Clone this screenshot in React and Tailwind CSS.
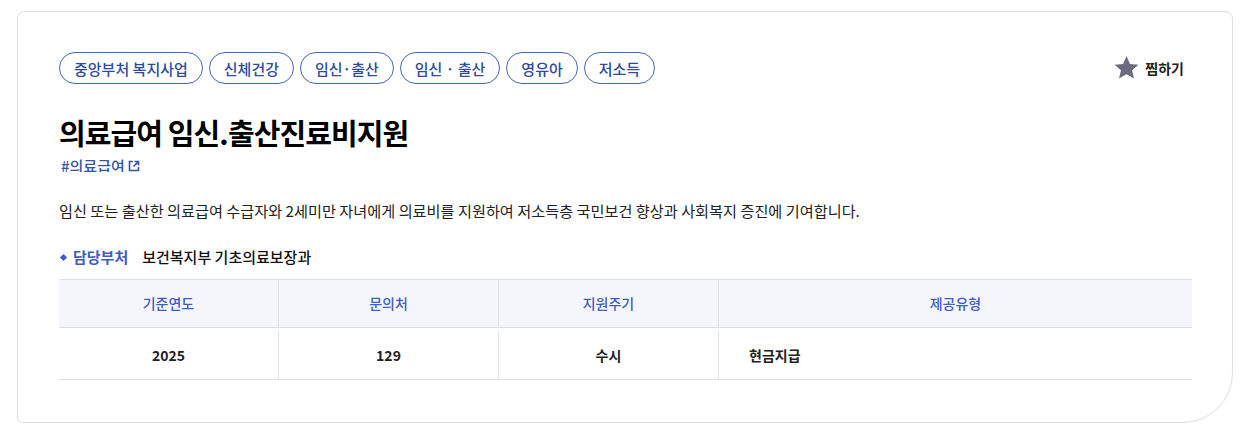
import React from 'react';

const tags = ['중앙부처 복지사업', '신체건강', '임신·출산', '임신 · 출산', '영유아', '저소득'];

const columns = [
  { head: '기준연도', value: '2025', w: 'w-[220px]', align: 'text-center' },
  { head: '문의처', value: '129', w: 'w-[220px]', align: 'text-center' },
  { head: '지원주기', value: '수시', w: 'w-[220px]', align: 'text-center' },
  { head: '제공유형', value: '현금지급', w: 'flex-1', align: 'text-left pl-[30px]' },
];

export default function App() {
  return (
    <div
      className="w-[1250px] h-[435px] bg-white pt-[11px] pl-[17px]"
      style={{ fontFamily: '"Noto Sans CJK KR", "Noto Sans", sans-serif' }}
    >
      <div className="w-[1216px] h-[412px] border border-[#dedede] rounded-t-[8px] rounded-bl-[6px] rounded-br-[50px] pt-[40px] pl-[41px] pr-[40px]">
        {/* tags + bookmark */}
        <div className="flex items-center justify-between">
          <div className="flex gap-[6px]">
            {tags.map((tag, i) => (
              <span
                key={i}
                className="h-[32px] px-[14px] flex items-center rounded-full border border-[#4a63b8] text-[#2f4a9e] text-[15px] font-medium leading-none"
              >
                {tag}
              </span>
            ))}
          </div>
          <button className="flex items-center gap-[5px] mr-[8px] text-[14px] font-bold text-[#222]">
            <svg width="27" height="26" viewBox="0 0 24 24">
              <path
                d="M12 1l3.2 7.3 7.8.6-5.9 5.1 1.8 7.8L12 17.8l-6.9 4 1.8-7.8L1 8.9l7.8-.6z"
                fill="#6b6b80"
              />
            </svg>
            찜하기
          </button>
        </div>

        {/* title */}
        <h1 className="mt-[28px] text-[29px] font-bold leading-[40px] text-black tracking-[-0.9px]">
          의료급여 임신.출산진료비지원
        </h1>
        <div className="mt-[6px] h-[14px] overflow-hidden">
          <span className="flex items-center gap-[3px] text-[15px] font-medium leading-[16px] text-[#3553a8] pl-[2px]">
            #의료급여
            <svg width="12" height="12" viewBox="0 0 12 12" fill="none" stroke="#3553a8" strokeWidth="1.6">
              <path d="M5 1.5H1.5v9h9V7" />
              <path d="M6.5 1.5h4v4M10.5 1.5L5.5 6.5" />
            </svg>
          </span>
        </div>

        {/* description */}
        <p className="mt-[26px] text-[15.2px] leading-[24px] text-[#222]">
          임신 또는 출산한 의료급여 수급자와 2세미만 자녀에게 의료비를 지원하여 저소득층 국민보건 향상과 사회복지 증진에 기여합니다.
        </p>

        {/* department */}
        <div className="mt-[23px] flex items-center text-[15px] leading-[24px]">
          <span className="w-[5px] h-[5px] bg-[#3f5bc4] rotate-45 ml-[2px] mr-[7px]" />
          <span className="font-bold text-[#3f5bc4]">담당부처</span>
          <span className="ml-[14px] font-medium text-[#111]">보건복지부 기초의료보장과</span>
        </div>

        {/* table */}
        <div className="mt-[10px] w-[1133px] border-t border-[#e0e0e0]">
          <div className="flex h-[48px] bg-[#f5f6fb] border-b border-[#dcdde3]">
            {columns.map((c, i) => (
              <div
                key={i}
                className={`${c.w} flex items-center justify-center text-[14px] font-medium text-[#3f5bc4] ${i < 3 ? 'border-r border-[#e2e2e2]' : ''}`}
              >
                {c.head}
              </div>
            ))}
          </div>
          <div className="flex h-[52px] border-b border-[#e0e0e0] pt-[3px]">
            {columns.map((c, i) => (
              <div
                key={i}
                className={`${c.w} ${c.align} flex items-center ${i < 3 ? 'justify-center border-r border-[#e2e2e2]' : ''} text-[14px] font-bold text-[#222]`}
              >
                {c.value}
              </div>
            ))}
          </div>
        </div>
      </div>
    </div>
  );
}
